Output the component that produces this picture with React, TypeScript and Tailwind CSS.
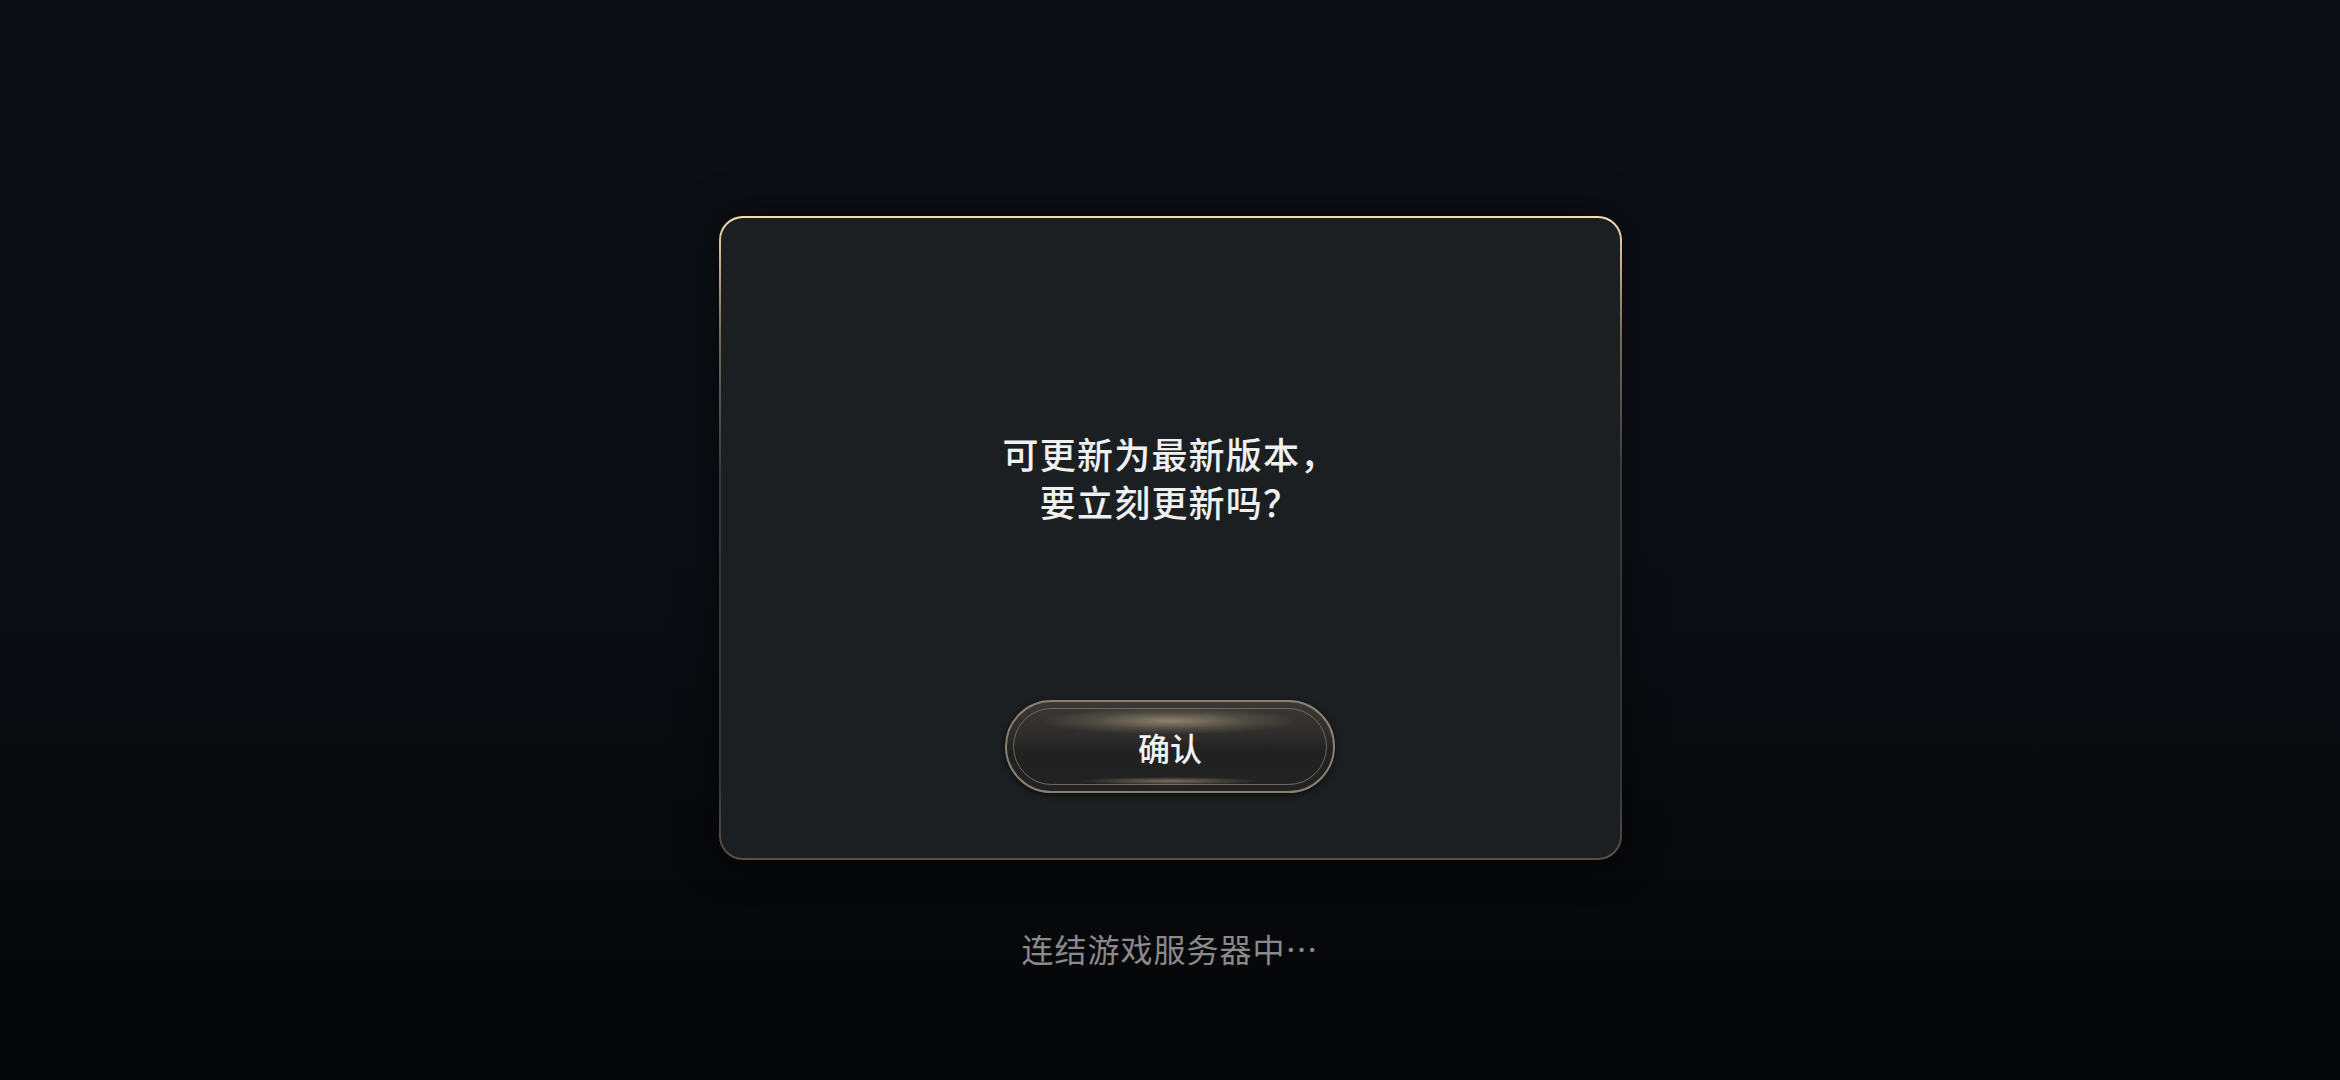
import React from "react";

const font = '"Noto Sans CJK SC", "Noto Sans", sans-serif';

function ConfirmButton({ label }: { label: string }) {
  return (
    <button
      className="relative flex h-[93px] w-[330px] items-center justify-center rounded-full border-2 border-[#8a8070] bg-[linear-gradient(to_bottom,#3b3834_0%,#2d2c2a_40%,#212121_55%,#222222_100%)] shadow-[0_2px_6px_rgba(0,0,0,0.6)]"
      style={{ fontFamily: font }}
    >
      {/* inner ring */}
      <span className="pointer-events-none absolute inset-[6px] rounded-full border-[1.5px] border-[#6f6a62]" />
      {/* top gloss */}
      <span className="pointer-events-none absolute left-[12%] right-[12%] top-[6px] h-[26px] rounded-full bg-[radial-gradient(ellipse_at_center,rgba(230,210,170,0.5)_0%,rgba(230,210,170,0.15)_45%,rgba(0,0,0,0)_75%)]" />
      {/* bottom gloss */}
      <span className="pointer-events-none absolute bottom-[6px] left-[22%] right-[22%] h-[8px] rounded-full bg-[radial-gradient(ellipse_at_center,rgba(225,205,165,0.45)_0%,rgba(0,0,0,0)_70%)]" />
      <span className="relative text-[32px] font-medium leading-none text-[#f2f2f2]">{label}</span>
    </button>
  );
}

export default function App() {
  return (
    <div
      className="flex h-[1080px] w-[2340px] flex-col items-center bg-[linear-gradient(to_bottom,#0b0e14_0%,#0b0e14_50%,#07090c_78%,#050608_100%)] pt-[216px]"
      style={{ fontFamily: font }}
    >
      {/* dialog frame: gold on top fading down the sides */}
      <div className="rounded-[24px] bg-[linear-gradient(to_bottom,#f3dfb4_0%,#d6bd92_5%,#7a6c58_18%,#3a3a3a_40%,#363638_88%,#5e5044_100%)] p-[2px] shadow-[0_0_40px_rgba(0,0,0,0.5)]">
        <div className="flex h-[640px] w-[899px] flex-col items-center rounded-[22px] bg-[#1b1f22] pt-[211px]">
          <p className="text-center text-[36px] font-medium leading-[48px] tracking-[1.2px] text-[#f0f0f0]">
            可更新为最新版本，
            <br />
            要立刻更新吗？
          </p>
          <div className="mt-[175px]">
            <ConfirmButton label="确认" />
          </div>
        </div>
      </div>

      <p className="mt-[66px] text-[32px] leading-[44px] tracking-[1px] text-[#8a8a8a]">连结游戏服务器中…</p>
    </div>
  );
}
